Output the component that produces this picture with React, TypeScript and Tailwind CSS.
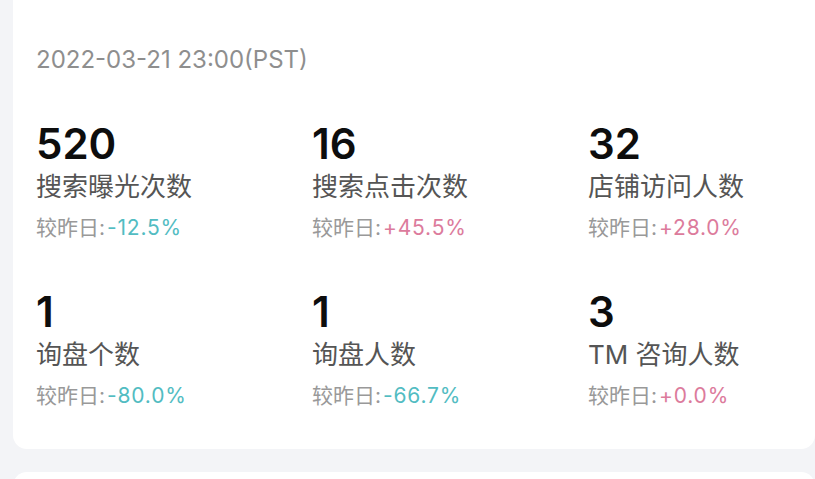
const stats = [
  { value: "520", label: "搜索曝光次数", change: "-12.5%", up: false },
  { value: "16", label: "搜索点击次数", change: "+45.5%", up: true },
  { value: "32", label: "店铺访问人数", change: "+28.0%", up: true },
  { value: "1", label: "询盘个数", change: "-80.0%", up: false },
  { value: "1", label: "询盘人数", change: "-66.7%", up: false },
  { value: "3", label: "TM 咨询人数", change: "+0.0%", up: true },
];

export default function App() {
  return (
    <div
      className="w-[815px] h-[479px] overflow-hidden bg-[#f3f4f7]"
      style={{ fontFamily: 'Inter, "Noto Sans CJK SC", sans-serif' }}
    >
      <div className="ml-[13px] w-[802px] h-[449px] bg-white rounded-b-[14px] overflow-hidden pl-[23px] pt-[45px]">
        <div className="text-[24px] leading-[30px] text-[#8e8e8e]">
          2022-03-21 23:00(PST)
        </div>

        <div className="mt-[47px] grid grid-cols-[276px_276px_276px] gap-y-[48px]">
          {stats.map((s, i) => (
            <div key={i} className="flex flex-col">
              <div className="text-[42px] leading-[44px] font-semibold text-[#0d0d0d]">
                {s.value}
              </div>
              <div className="mt-[4px] text-[26px] leading-[34px] text-[#555]">
                {s.label}
              </div>
              <div className="mt-[10px] text-[21px] leading-[28px] text-[#999] whitespace-nowrap">
                较昨日:
                <span className={"ml-[2px] tracking-[0.8px] " + (s.up ? "text-[#dc7b9c]" : "text-[#52bcc2]")}>
                  {s.change}
                </span>
              </div>
            </div>
          ))}
        </div>
      </div>

      <div className="ml-[13px] mt-[23px] w-[802px] h-[40px] bg-white rounded-t-[14px]" />
    </div>
  );
}
